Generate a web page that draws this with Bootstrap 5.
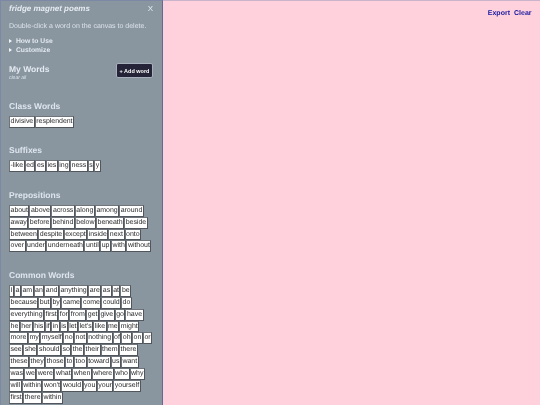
<!DOCTYPE html>
<html lang="en">
<head>
<meta charset="utf-8">
<title>fridge magnet poems</title>
<link href="https://cdn.jsdelivr.net/npm/bootstrap@5.3.0/dist/css/bootstrap.min.css" rel="stylesheet">
<style>
html,body{height:100%;margin:0;overflow:hidden}
body{font-family:"Liberation Sans",Arial,sans-serif;background:#ffd1dc;text-rendering:geometricPrecision}
.shell{height:405px}
.side{width:163px;flex:none;height:405px;overflow:hidden;background:#8996a0;color:#dfe6ee;border-right:1.5px solid #5e6c96;border-top:1px solid #7d88a6;border-left:1px solid #7d88a6;padding:3px 9px 0 8px}
.canvas-area{background:#ffd1dc;border-top:1px solid #c9b4cc;padding:7.5px 8.5px 0 0}
.title,.closex,.hint,.disc,.h-my,.clear-all,.addw,.sect,.tiles,.top-act{filter:blur(.22px)}
.title{font-size:8px;font-style:italic;font-weight:700;color:#e6ebf1;margin:0;line-height:10px}
.closex{font-size:8px;color:#e6ebf1;padding:0;background:none;border:0;line-height:1}
.hint{font-size:7px;line-height:9px;color:#dbe2ea;margin:7.5px 0 6px}
.disc{font-size:6.75px;font-weight:700;color:#e4eaf1;line-height:9px}
.tri{display:inline-block;border-left:3.5px solid #f2f5f8;border-top:2.2px solid transparent;border-bottom:2.2px solid transparent;margin-right:4px}
.mine{margin-top:8.5px}
.h-my{font-size:8.5px;font-weight:700;color:#e4eaf1;margin:0;line-height:12px}
.clear-all{font-size:5px;font-style:italic;color:#dfe6ee;line-height:6px}
.addw{background:#252338;color:#fff;font-size:5.5px;font-weight:700;border:1px solid #a9b0bd;border-radius:2px;padding:0;width:37px;height:15px;line-height:12px}
.sect{font-size:8.5px;font-weight:700;color:#dde5ee;margin:16.5px 0 4px;line-height:12px}
.sect-first{margin-top:19px}
.tile{background:#fff;color:#2b2b2b;font-size:7px;letter-spacing:-.03px;line-height:9.9px;height:11.9px;padding:0 .52px;border:1px solid #70757c;border-right-color:#51565c;border-bottom-color:#51565c;white-space:nowrap}
.top-act{font-size:7px;font-weight:700;color:#1a1aa0;text-decoration:none;line-height:9px}
</style>
</head>
<body>
<div class="d-flex shell">
  <aside class="side">
    <div class="d-flex justify-content-between align-items-center">
      <h1 class="title">fridge magnet poems</h1>
      <button class="closex" type="button">X</button>
    </div>
    <p class="hint">Double-click a word on the canvas to delete.</p>
    <div class="disc"><span class="tri"></span>How to Use</div>
    <div class="disc"><span class="tri"></span>Customize</div>
    <div class="d-flex justify-content-between align-items-start mine">
      <div>
        <h2 class="h-my">My Words</h2>
        <div class="clear-all">clear all</div>
      </div>
      <button class="addw" type="button">+ Add word</button>
    </div>
    <h2 class="sect sect-first">Class Words</h2>
    <div class="tiles">
      <div class="d-flex"><span class="tile">divisive</span><span class="tile">resplendent</span></div>
    </div>
    <h2 class="sect">Suffixes</h2>
    <div class="tiles">
      <div class="d-flex"><span class="tile">-like</span><span class="tile">ed</span><span class="tile">es</span><span class="tile">ies</span><span class="tile">ing</span><span class="tile">ness</span><span class="tile">s</span><span class="tile">y</span></div>
    </div>
    <h2 class="sect">Prepositions</h2>
    <div class="tiles">
      <div class="d-flex"><span class="tile">about</span><span class="tile">above</span><span class="tile">across</span><span class="tile">along</span><span class="tile">among</span><span class="tile">around</span></div>
      <div class="d-flex"><span class="tile">away</span><span class="tile">before</span><span class="tile">behind</span><span class="tile">below</span><span class="tile">beneath</span><span class="tile">beside</span></div>
      <div class="d-flex"><span class="tile">between</span><span class="tile">despite</span><span class="tile">except</span><span class="tile">inside</span><span class="tile">next</span><span class="tile">onto</span></div>
      <div class="d-flex"><span class="tile">over</span><span class="tile">under</span><span class="tile">underneath</span><span class="tile">until</span><span class="tile">up</span><span class="tile">with</span><span class="tile">without</span></div>
    </div>
    <h2 class="sect">Common Words</h2>
    <div class="tiles">
      <div class="d-flex"><span class="tile">I</span><span class="tile">a</span><span class="tile">am</span><span class="tile">an</span><span class="tile">and</span><span class="tile">anything</span><span class="tile">are</span><span class="tile">as</span><span class="tile">at</span><span class="tile">be</span></div>
      <div class="d-flex"><span class="tile">because</span><span class="tile">but</span><span class="tile">by</span><span class="tile">came</span><span class="tile">come</span><span class="tile">could</span><span class="tile">do</span></div>
      <div class="d-flex"><span class="tile">everything</span><span class="tile">first</span><span class="tile">for</span><span class="tile">from</span><span class="tile">get</span><span class="tile">give</span><span class="tile">go</span><span class="tile">have</span></div>
      <div class="d-flex"><span class="tile">he</span><span class="tile">her</span><span class="tile">his</span><span class="tile">if</span><span class="tile">in</span><span class="tile">is</span><span class="tile">let</span><span class="tile">let's</span><span class="tile">like</span><span class="tile">me</span><span class="tile">might</span></div>
      <div class="d-flex"><span class="tile">more</span><span class="tile">my</span><span class="tile">myself</span><span class="tile">no</span><span class="tile">not</span><span class="tile">nothing</span><span class="tile">of</span><span class="tile">oh</span><span class="tile">on</span><span class="tile">or</span></div>
      <div class="d-flex"><span class="tile">see</span><span class="tile">she</span><span class="tile">should</span><span class="tile">so</span><span class="tile">the</span><span class="tile">their</span><span class="tile">them</span><span class="tile">there</span></div>
      <div class="d-flex"><span class="tile">these</span><span class="tile">they</span><span class="tile">those</span><span class="tile">to</span><span class="tile">too</span><span class="tile">toward</span><span class="tile">us</span><span class="tile">want</span></div>
      <div class="d-flex"><span class="tile">was</span><span class="tile">we</span><span class="tile">were</span><span class="tile">what</span><span class="tile">when</span><span class="tile">where</span><span class="tile">who</span><span class="tile">why</span></div>
      <div class="d-flex"><span class="tile">will</span><span class="tile">within</span><span class="tile">won't</span><span class="tile">would</span><span class="tile">you</span><span class="tile">your</span><span class="tile">yourself</span></div>
      <div class="d-flex"><span class="tile">first</span><span class="tile">there</span><span class="tile">within</span></div>
    </div>
  </aside>
  <main class="canvas-area flex-grow-1 d-flex justify-content-end align-items-start gap-1">
    <a class="top-act" href="#">Export</a>
    <a class="top-act" href="#">Clear</a>
  </main>
</div>
<script src="https://cdn.jsdelivr.net/npm/bootstrap@5.3.0/dist/js/bootstrap.bundle.min.js"></script>
</body>
</html>
